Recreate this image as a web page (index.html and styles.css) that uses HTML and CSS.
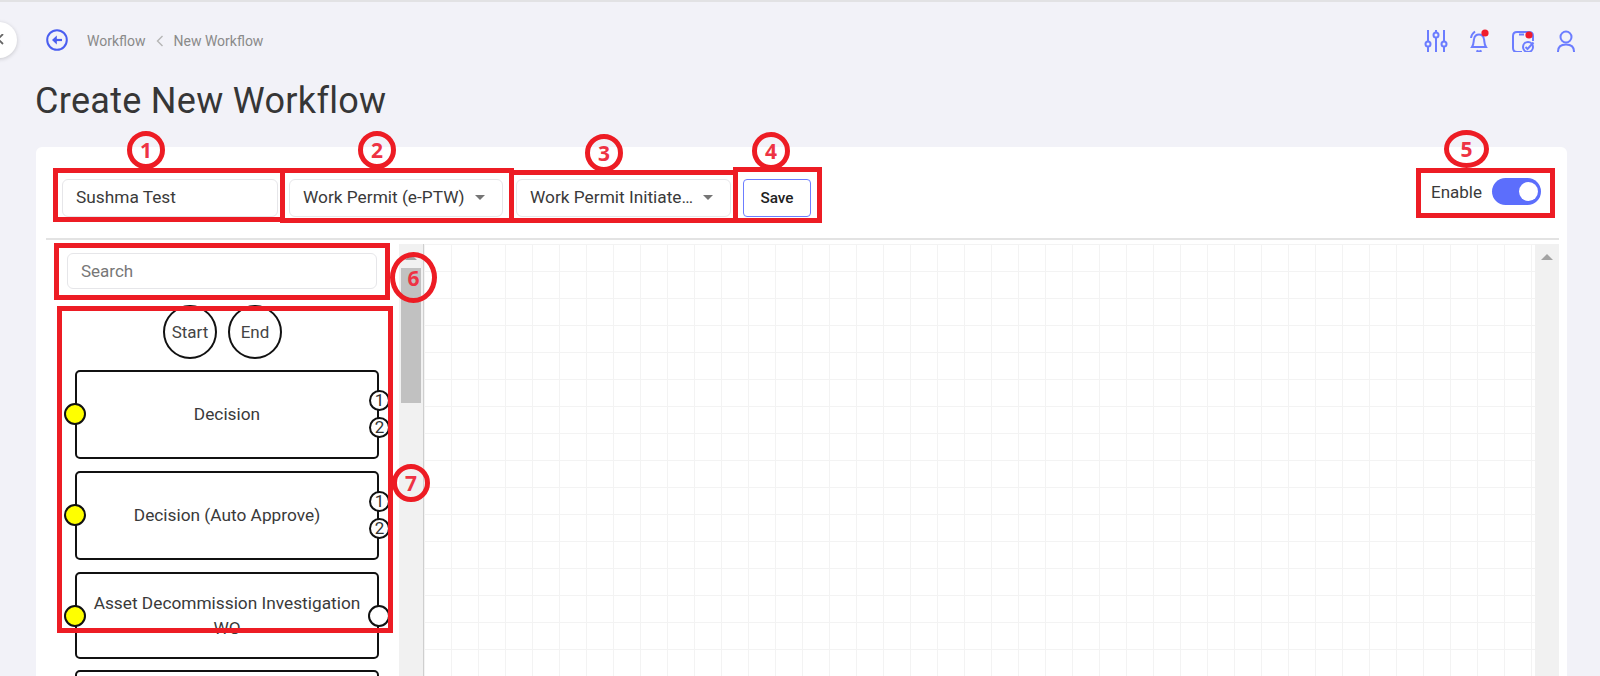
FILE: index.html
```html
<!DOCTYPE html>
<html lang="en">
<head>
<meta charset="utf-8">
<title>Create New Workflow</title>
<link rel="stylesheet" href="styles.css">
</head>
<body>
<div class="collapse-btn"><svg width="12" height="12" viewBox="0 0 12 12"><path d="M0 0 L10 10 M10 0 L0 10" stroke="#666" stroke-width="1.8" fill="none"/></svg></div>
<header class="topbar">
  <svg class="back" width="24" height="24" viewBox="0 0 24 24"><circle cx="12" cy="12" r="9.8" fill="none" stroke="#4a5ef0" stroke-width="2"/><path d="M17 12 H10" stroke="#4a5ef0" stroke-width="2.2" fill="none"/><path d="M11.8 7.6 L7 12 L11.8 16.4 Z" fill="#4a5ef0"/></svg>
  <nav class="crumbs"><span>Workflow</span><svg width="8" height="12" viewBox="0 0 8 12"><path d="M6.5 1 L1.5 6 L6.5 11" stroke="#b5b5b5" stroke-width="1.4" fill="none"/></svg><span>New Workflow</span></nav>
  <div class="tools">
    <svg width="24" height="24" viewBox="0 0 24 24" class="ico"><path d="M4 2 V13 M4 19 V24 M12 2 V4 M12 10 V24 M20 2 V13 M20 19 V24"/><circle cx="4" cy="16" r="2.5"/><circle cx="12" cy="7" r="2.5"/><circle cx="20" cy="16" r="2.5"/></svg>
    <svg width="24" height="24" viewBox="0 0 24 24" class="ico"><path d="M5 19 C7 16 6.5 13 7 11 C7.6 8 9.5 6.5 12 6.5 C14.5 6.5 16.4 8 17 11 C17.5 13 17 16 19 19 Z"/><path d="M9.5 22.5 Q12 24.5 14.5 22.5"/><path d="M4 10 Q4.5 6 8 3.5"/><circle class="dot" cx="18" cy="5" r="3.6"/></svg>
    <svg width="24" height="24" viewBox="0 0 24 24" class="ico"><path d="M11 24 H6 Q2 24 2 20 V8 Q2 4 6 4 H18 Q22 4 22 8 V13"/><path d="M8 6.5 H13"/><circle cx="17" cy="19" r="5"/><path d="M14.5 19 L16.5 21 L22.5 14.5"/><circle class="dot" cx="18" cy="7" r="3.6"/></svg>
    <svg width="24" height="24" viewBox="0 0 24 24" class="ico"><circle cx="12" cy="9" r="5.5"/><path d="M4 24 V23.5 Q4 16.5 12 16.5 Q20 16.5 20 23.5 V24"/></svg>
  </div>
</header>
<h1 class="title">Create New Workflow</h1>
<main class="card">
  <div class="toolbar">
    <div class="field name">Sushma Test</div>
    <div class="field select s2"><span>Work Permit (e-PTW)</span><i class="caret"></i></div>
    <div class="field select s3"><span>Work Permit Initiate…</span><i class="caret"></i></div>
    <button class="save">Save</button>
    <div class="enable"><span>Enable</span><span class="toggle"><i></i></span></div>
  </div>
  <div class="workspace">
    <aside class="palette">
      <div class="palette-list">
        <div class="search">Search</div>
        <div class="terminals"><div class="terminal">Start</div><div class="terminal">End</div></div>
        <div class="block"><span>Decision</span><i class="pin in"></i><i class="pin out p1">1</i><i class="pin out p2">2</i></div>
        <div class="block"><span>Decision (Auto Approve)</span><i class="pin in"></i><i class="pin out p1">1</i><i class="pin out p2">2</i></div>
        <div class="block short"><span>Asset Decommission Investigation WO</span><i class="pin in"></i><i class="pin out solo"></i></div>
        <div class="block"></div>
      </div>
      <div class="vscroll"><i class="arrow"></i><i class="thumb"></i></div>
    </aside>
    <section class="canvas"><div class="vscroll wide"><i class="arrow"></i></div></section>
  </div>
</main>
<div class="annotations">
  <div class="mark m1">1</div><div class="mark m2">2</div><div class="mark m3">3</div><div class="mark m4">4</div><div class="mark m5">5</div><div class="mark m6">6</div><div class="mark m7">7</div>
  <div class="frame f1"></div><div class="frame f2"></div><div class="frame f3"></div><div class="frame f4"></div><div class="frame f5"></div><div class="frame f6"></div><div class="frame f7"></div>
</div>
</body>
</html>
```

FILE: styles.css
```css
html, body { margin: 0; height: 676px; overflow: hidden; }
body { background: #f2f2f8; font-family: Roboto, "Liberation Sans", sans-serif; color: #3a3a3a; position: relative; border-top: 2px solid #e2e2e4; box-sizing: border-box; }

.collapse-btn { position: absolute; left: -19px; top: 20px; width: 36px; height: 36px; border-radius: 50%; background: #fff; box-shadow: 0 1px 4px rgba(0,0,0,.18); display: flex; align-items: center; justify-content: center; }

.topbar { height: 76px; display: flex; align-items: center; padding-left: 45px; padding-right: 22px; }
.crumbs { display: flex; align-items: center; gap: 10px; margin: 1px 0 0 18px; font-size: 14px; color: #8a8a8a; }
.tools { margin-left: auto; display: flex; gap: 19.5px; align-items: center; }
.ico { fill: none; stroke: #6c7dff; stroke-width: 2; }
.ico .dot { fill: #f01c2c; stroke: none; }

.title { margin: 2px 0 25px 35px; font-size: 36px; line-height: 42px; font-weight: 400; letter-spacing: .3px; color: #363636; }

.card { margin: 0 33px 0 36px; height: 600px; background: #fff; border-radius: 6px; padding-top: 32px; box-sizing: border-box; }
.toolbar { display: flex; align-items: center; height: 38px; padding: 0 26px; margin-bottom: 21px; }
.field { height: 38px; box-sizing: border-box; border: 1px solid #e6e6e9; border-radius: 6px; font-size: 17.3px; display: flex; align-items: center; padding: 0 0 2px 13px; color: #3a3a3a; }
.name { width: 216px; margin-right: 11px; }
.select { justify-content: space-between; padding-right: 17px; white-space: nowrap; }
.s2 { width: 214px; margin-right: 13px; }
.s3 { width: 215px; margin-right: 12px; }
.caret { width: 0; height: 0; border: 5px solid transparent; border-top-color: #757575; border-bottom: 0; }
.save { width: 68px; height: 38px; background: #fff; border: 1px solid #6c7dff; border-radius: 4px; font: 500 15.3px Roboto, sans-serif; color: #222; padding: 0; }
.enable { margin-left: auto; margin-top: -1px; align-self: flex-start; display: flex; align-items: center; gap: 10px; font-size: 17px; }
.toggle { width: 49px; height: 27px; border-radius: 14px; background: #5c6efc; display: flex; align-items: center; justify-content: flex-end; padding-right: 3px; box-sizing: border-box; }
.toggle i { width: 19px; height: 19px; border-radius: 50%; background: #fff; display: block; }

.workspace { margin: 0 8px 0 10px; border-top: 2px solid #e3e3e3; padding-top: 4px; display: flex; height: 440px; }
.palette { width: 377px; flex: none; display: flex; border-right: 1px solid #cfcfcf; box-sizing: content-box; }
.palette-list { width: 353px; overflow: hidden; }
.search { margin: 9px 22px 0 21px; height: 36px; box-sizing: border-box; border: 1px solid #e6e6e9; border-radius: 6px; padding-left: 13px; font-size: 17px; line-height: 35px; color: #777; }
.terminals { display: flex; justify-content: center; gap: 11px; margin: 16px 0 11px 14px; width: 325px; }
.terminal { width: 54px; height: 54px; box-sizing: border-box; border: 2px solid #111; border-radius: 50%; display: flex; align-items: center; justify-content: center; font-size: 17px; color: #444; }
.block { position: relative; margin: 0 0 12px 29px; width: 304px; height: 89px; box-sizing: border-box; border: 2px solid #111; border-radius: 5px; display: flex; align-items: center; justify-content: center; padding: 0 16px; text-align: center; font-size: 17.3px; line-height: 25px; color: #3a3a3a; }
.block.short { height: 87px; margin-bottom: 11px; }
.pin { position: absolute; box-sizing: border-box; border: 2px solid #111; border-radius: 50%; background: #fff; font-style: normal; display: flex; align-items: center; justify-content: center; font-size: 17px; line-height: 1; color: #333; }
.pin.in { left: -13px; top: 31px; width: 22px; height: 22px; background: #ffff00; }
.pin.out { right: -13px; width: 21px; height: 21px; }
.p1 { top: 18px; }
.p2 { top: 45px; }
.pin.solo { top: 31px; width: 22px; height: 22px; }

.vscroll { width: 24px; height: 100%; background: #f1f1f1; position: relative; flex: none; }
.arrow { position: absolute; left: 6px; top: 10px; width: 0; height: 0; border: 6px solid transparent; border-top: 0; border-bottom: 6px solid #a3a3a3; }
.thumb { position: absolute; left: 2px; top: 24px; width: 20px; height: 135px; background: #c1c1c1; }
.canvas { flex: 1; display: flex; justify-content: flex-end; background-color: #fff; background-image: linear-gradient(#f3f3f3 1px, transparent 1px), linear-gradient(90deg, #f3f3f3 1px, transparent 1px); background-size: 27px 27px; }

.annotations { position: absolute; left: 0; top: -2px; width: 1600px; height: 676px; pointer-events: none; }
.frame { position: absolute; box-sizing: border-box; border: 5px solid #ed1c24; }
.f1 { left: 53px; top: 168px; width: 232px; height: 54px; }
.f2 { left: 280px; top: 168px; width: 234px; height: 55px; }
.f3 { left: 509px; top: 170px; width: 229px; height: 53px; }
.f4 { left: 733px; top: 167px; width: 89px; height: 56px; }
.f5 { left: 1416px; top: 168px; width: 139px; height: 50px; }
.f6 { left: 54px; top: 243px; width: 336px; height: 57px; }
.f7 { left: 57px; top: 306px; width: 336px; height: 327px; }
.mark { position: absolute; box-sizing: border-box; width: 38px; height: 38px; border: 5px solid #ed1c24; border-radius: 50%; display: flex; align-items: center; justify-content: center; font: 700 21px "Open Sans", sans-serif; color: #ee3344; }
.m1 { left: 127px; top: 131px; }
.m2 { left: 358px; top: 131px; }
.m3 { left: 585px; top: 134px; }
.m4 { left: 752px; top: 132px; }
.m5 { left: 1444px; top: 130px; width: 45px; }
.m6 { left: 390px; top: 252px; width: 47px; height: 51px; }
.m7 { left: 392px; top: 464px; }
```
